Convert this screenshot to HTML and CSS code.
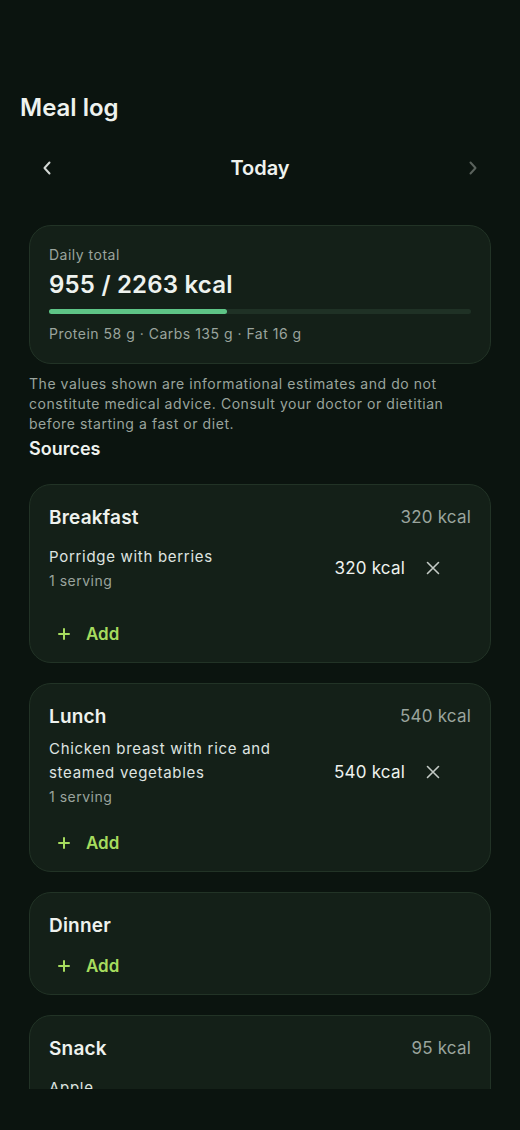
FILE: index.html
```html
<!DOCTYPE html>
<html lang="en">
<head>
    <meta charset="UTF-8">
    <meta name="viewport" content="width=device-width, initial-scale=1.0">
    <title>Meal log</title>
    <link rel="stylesheet" href="styles.css">
</head>
<body>

<div class="screen">
    <h1 class="page-title">Meal log</h1>

    <div class="date-nav">
        <button class="nav-btn" aria-label="Previous day">
            <svg width="10" height="14" viewBox="0 0 10 14"><path d="M7.5 1.5 2.5 7l5 5.5" fill="none" stroke="currentColor" stroke-width="2" stroke-linecap="round" stroke-linejoin="round"/></svg>
        </button>
        <div class="date-label">Today</div>
        <button class="nav-btn nav-btn-off" aria-label="Next day">
            <svg width="10" height="14" viewBox="0 0 10 14"><path d="M2.5 1.5 7.5 7l-5 5.5" fill="none" stroke="currentColor" stroke-width="2" stroke-linecap="round" stroke-linejoin="round"/></svg>
        </button>
    </div>

    <div class="content">
        <div class="card total-card">
            <div class="total-label">Daily total</div>
            <div class="total-value">955 / 2263 kcal</div>
            <div class="progress"><div class="progress-fill" style="width: 42.2%"></div></div>
            <div class="macros">Protein 58 g · Carbs 135 g · Fat 16 g</div>
        </div>

        <p class="disclaimer">The values shown are informational estimates and do not constitute medical advice. Consult your doctor or dietitian before starting a fast or diet.</p>

        <h2 class="section-title">Sources</h2>

        <div class="card meal">
            <div class="meal-head">
                <span class="meal-name">Breakfast</span>
                <span class="meal-kcal">320 kcal</span>
            </div>
            <div class="item">
                <div class="item-info">
                    <div class="item-name">Porridge with berries</div>
                    <div class="item-qty">1 serving</div>
                </div>
                <div class="item-kcal">320 kcal</div>
                <button class="remove-btn" aria-label="Remove">
                    <svg width="14" height="14" viewBox="0 0 14 14"><path d="M1.5 1.5l11 11M12.5 1.5l-11 11" stroke="currentColor" stroke-width="1.6" stroke-linecap="round"/></svg>
                </button>
            </div>
            <button class="add-btn">
                <svg width="12" height="12" viewBox="0 0 12 12"><path d="M6 1v10M1 6h10" stroke="currentColor" stroke-width="2" stroke-linecap="round"/></svg>
                Add
            </button>
        </div>

        <div class="card meal">
            <div class="meal-head">
                <span class="meal-name">Lunch</span>
                <span class="meal-kcal">540 kcal</span>
            </div>
            <div class="item">
                <div class="item-info">
                    <div class="item-name">Chicken breast with rice and steamed vegetables</div>
                    <div class="item-qty">1 serving</div>
                </div>
                <div class="item-kcal">540 kcal</div>
                <button class="remove-btn" aria-label="Remove">
                    <svg width="14" height="14" viewBox="0 0 14 14"><path d="M1.5 1.5l11 11M12.5 1.5l-11 11" stroke="currentColor" stroke-width="1.6" stroke-linecap="round"/></svg>
                </button>
            </div>
            <button class="add-btn">
                <svg width="12" height="12" viewBox="0 0 12 12"><path d="M6 1v10M1 6h10" stroke="currentColor" stroke-width="2" stroke-linecap="round"/></svg>
                Add
            </button>
        </div>

        <div class="card meal">
            <div class="meal-head">
                <span class="meal-name">Dinner</span>
            </div>
            <button class="add-btn">
                <svg width="12" height="12" viewBox="0 0 12 12"><path d="M6 1v10M1 6h10" stroke="currentColor" stroke-width="2" stroke-linecap="round"/></svg>
                Add
            </button>
        </div>

        <div class="card meal">
            <div class="meal-head">
                <span class="meal-name">Snack</span>
                <span class="meal-kcal">95 kcal</span>
            </div>
            <div class="item">
                <div class="item-info">
                    <div class="item-name">Apple</div>
                    <div class="item-qty">1 serving</div>
                </div>
                <div class="item-kcal">95 kcal</div>
                <button class="remove-btn" aria-label="Remove">
                    <svg width="14" height="14" viewBox="0 0 14 14"><path d="M1.5 1.5l11 11M12.5 1.5l-11 11" stroke="currentColor" stroke-width="1.6" stroke-linecap="round"/></svg>
                </button>
            </div>
            <button class="add-btn">
                <svg width="12" height="12" viewBox="0 0 12 12"><path d="M6 1v10M1 6h10" stroke="currentColor" stroke-width="2" stroke-linecap="round"/></svg>
                Add
            </button>
        </div>
    </div>
</div>

</body>
</html>
```

FILE: styles.css
```css
body {
    margin: 0;
    height: 1130px;
    background: #0b140f;
    color: #eef2ee;
    font-family: Inter, "Noto Sans", sans-serif;
}
button {
    font-family: inherit;
    background: none;
    border: none;
    padding: 0;
    cursor: pointer;
}
.screen {
    height: 1089px;
    overflow: hidden;
}
.page-title {
    margin: 0;
    padding: 93px 20px 0;
    font-size: 24px;
    line-height: 30px;
    font-weight: 600;
}
.date-nav {
    display: flex;
    align-items: center;
    justify-content: space-between;
    margin: 21px 24px 0;
    height: 48px;
}
.nav-btn {
    width: 46px;
    height: 46px;
    display: flex;
    align-items: center;
    justify-content: center;
    color: #d3d8d4;
}
.nav-btn-off {
    color: #5a625c;
}
.date-label {
    font-size: 20px;
    font-weight: 600;
}
.content {
    padding: 33px 29px 0;
}
.card {
    background: #142018;
    border: 1px solid #223326;
    border-radius: 22px;
    padding: 19px 19px 19px;
}
.total-label,
.macros {
    font-size: 14px;
    line-height: 20px;
    color: #9aa49d;
    letter-spacing: 0.5px;
}
.total-value {
    margin-top: 5px;
    font-size: 24px;
    line-height: 30px;
    font-weight: 600;
    letter-spacing: 0.2px;
}
.progress {
    margin-top: 9px;
    height: 5px;
    border-radius: 3px;
    background: #1f3125;
}
.progress-fill {
    height: 100%;
    border-radius: 3px;
    background: #5ec486;
}
.macros {
    margin-top: 10px;
}
.disclaimer {
    margin: 10px 0 0;
    font-size: 14px;
    line-height: 20px;
    color: #9aa49d;
    letter-spacing: 0.55px;
}
.section-title {
    margin: 4px 0 0;
    font-size: 18px;
    line-height: 22px;
    font-weight: 600;
}
.meal {
    margin-bottom: 20px;
}
.section-title + .meal {
    margin-top: 24px;
}
.meal-head {
    display: flex;
    justify-content: space-between;
    align-items: center;
    height: 26px;
}
.meal-name {
    font-size: 19px;
    font-weight: 600;
    letter-spacing: 0.2px;
}
.meal-kcal {
    font-size: 17px;
    color: #9aa49d;
    letter-spacing: 0.2px;
}
.item {
    display: flex;
    align-items: center;
    min-height: 60px;
    margin-top: 8px;
}
.item-info {
    flex: 1;
    padding-right: 50px;
}
.item-name {
    font-size: 15px;
    line-height: 24px;
    color: #dfe4e0;
    letter-spacing: 0.7px;
}
.item-qty {
    margin-top: 2px;
    font-size: 14px;
    line-height: 20px;
    color: #9aa49d;
    letter-spacing: 0.5px;
}
.item-kcal {
    font-size: 17px;
    color: #eef2ee;
    white-space: nowrap;
    letter-spacing: 0.2px;
}
.remove-btn {
    width: 42px;
    height: 42px;
    margin: 0 17px 0 7px;
    display: flex;
    align-items: center;
    justify-content: center;
    color: #c3cac5;
}
.add-btn {
    display: flex;
    align-items: center;
    gap: 16px;
    margin-top: 19px;
    padding-left: 9px;
    height: 18px;
    font-size: 17px;
    font-weight: 600;
    color: #a6dc5e;
}
.item + .add-btn {
    margin-top: 27px;
}
```
